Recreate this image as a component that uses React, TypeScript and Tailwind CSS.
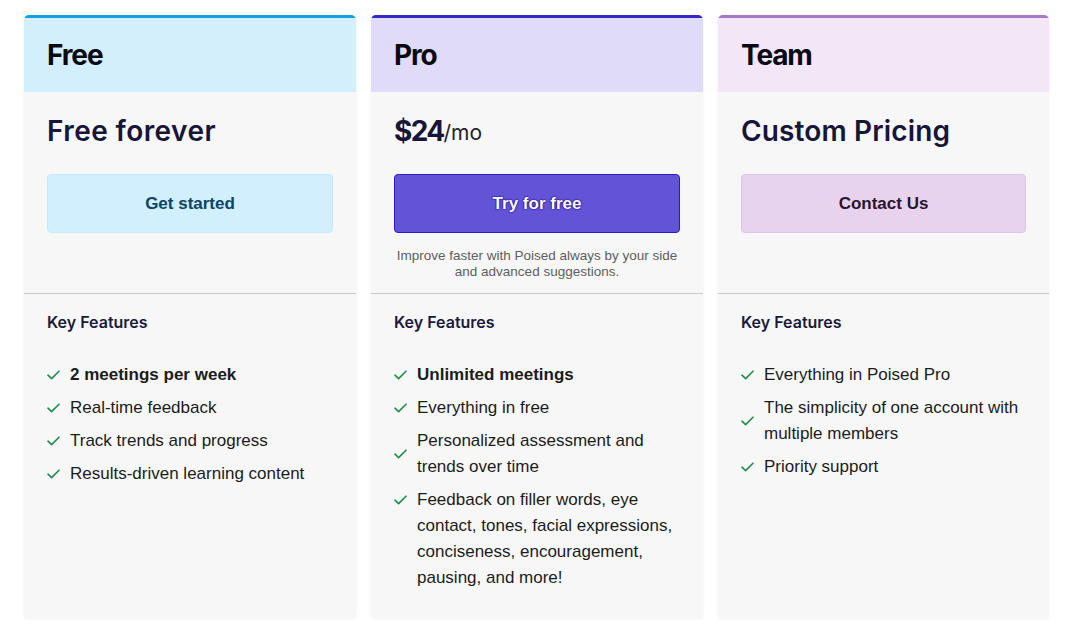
import React from "react";

type Feature = { text: string; bold?: boolean; top?: boolean };

const sans = '"Liberation Sans", Arial, sans-serif';
const head = 'Inter, "Noto Sans", sans-serif';

function Check() {
  return (
    <svg width="13" height="10" viewBox="0 0 13 10" fill="none" className="shrink-0">
      <path d="M1 5.2 L4.6 8.6 L12 1.2" stroke="#1f8a4c" strokeWidth="1.6" strokeLinecap="round" strokeLinejoin="round" />
    </svg>
  );
}

function FeatureList({ items }: { items: Feature[] }) {
  return (
    <ul className="flex flex-col gap-[7px]">
      {items.map((f) => (
        <li key={f.text} className={`flex gap-[10px] ${f.top ? "items-start" : "items-center"}`}>
          <span className={f.top ? "pt-[8px]" : ""}>
            <Check />
          </span>
          <span
            className={`text-[17px] leading-[26px] text-[#1c1c1c] ${f.bold ? "font-bold" : ""}`}
            style={{ fontFamily: sans }}
          >
            {f.text}
          </span>
        </li>
      ))}
    </ul>
  );
}

function KeyFeatures({ items }: { items: Feature[] }) {
  return (
    <div className="border-t border-[#c9c9c9] px-[23px] pt-[18px]">
      <div className="text-[16px] font-semibold leading-[20px] text-[#1b1a3c]" style={{ fontFamily: head }}>
        Key Features
      </div>
      <div className="mt-[30px]">
        <FeatureList items={items} />
      </div>
    </div>
  );
}

function Header({ title, border, bg }: { title: string; border: string; bg: string }) {
  return (
    <div className={`flex h-[77px] items-center border-t-[3px] px-[23px] ${border} ${bg}`}>
      <h2 className="text-[28px] font-bold tracking-[-0.04em] text-[#0a0a14]" style={{ fontFamily: head }}>
        {title}
      </h2>
    </div>
  );
}

const card =
  "flex h-[603px] flex-col overflow-hidden rounded-t-[5px] rounded-b-[4px] bg-[#f7f7f7] shadow-[0_1px_3px_rgba(0,0,0,0.06)]";

export default function App() {
  return (
    <div className="min-h-[638px] w-[1070px] bg-white">
      <div className="flex gap-[15px] pl-[24px] pt-[15px]">
        {/* Free */}
        <div className={`${card} w-[332px]`}>
          <Header title="Free" border="border-[#16a2e2]" bg="bg-[#d3effc]" />
          <div className="flex h-[201px] flex-col px-[23px] pt-[19px]">
            <div className="h-[40px] text-[28px] font-semibold leading-[40px] tracking-[0.015em] text-[#17153a]" style={{ fontFamily: head }}>
              Free forever
            </div>
            <button
              className="mt-[23px] h-[59px] w-full rounded-[4px] border border-[#c8e9f8] bg-[#d1effc] text-[17px] font-bold text-[#0b4565]"
              style={{ fontFamily: sans }}
            >
              Get started
            </button>
          </div>
          <KeyFeatures
            items={[
              { text: "2 meetings per week", bold: true },
              { text: "Real-time feedback" },
              { text: "Track trends and progress" },
              { text: "Results-driven learning content" },
            ]}
          />
        </div>

        {/* Pro */}
        <div className={`${card} w-[332px]`}>
          <Header title="Pro" border="border-[#3527c4]" bg="bg-[#e0dcf8]" />
          <div className="flex h-[201px] flex-col px-[23px] pt-[19px]">
            <div className="flex h-[40px] items-center text-[#17153a]" style={{ fontFamily: head }}>
              <span className="text-[28px] font-bold leading-[40px] tracking-[-0.06em]">$24</span>
              <span className="pt-[3px] text-[21px] font-normal leading-[40px] text-[#222]">/mo</span>
            </div>
            <button
              className="mt-[23px] h-[59px] w-full rounded-[4px] border border-[#2a1cc0] bg-[#6353d6] text-[17px] font-bold text-white [text-shadow:0_0_2px_#1a0c80,0_0_1px_#1a0c80,0_0_1px_#1a0c80]"
              style={{ fontFamily: sans }}
            >
              Try for free
            </button>
            <p className="mt-[15px] text-center text-[13.5px] leading-[16px] text-[#5e5e5e]" style={{ fontFamily: sans }}>
              Improve faster with Poised always by your side
              <br />
              and advanced suggestions.
            </p>
          </div>
          <KeyFeatures
            items={[
              { text: "Unlimited meetings", bold: true },
              { text: "Everything in free" },
              { text: "Personalized assessment and trends over time" },
              {
                text: "Feedback on filler words, eye contact, tones, facial expressions, conciseness, encouragement, pausing, and more!",
                top: true,
              },
            ]}
          />
        </div>

        {/* Team */}
        <div className={`${card} w-[331px]`}>
          <Header title="Team" border="border-[#a579c6]" bg="bg-[#f3e6f7]" />
          <div className="flex h-[201px] flex-col px-[23px] pt-[19px]">
            <div className="h-[40px] text-[28px] font-semibold leading-[40px] tracking-[0.005em] text-[#17153a]" style={{ fontFamily: head }}>
              Custom Pricing
            </div>
            <button
              className="mt-[23px] h-[59px] w-full rounded-[4px] border border-[#dcc4e8] bg-[#e8d3ef] text-[17px] font-bold text-[#2a1530]"
              style={{ fontFamily: sans }}
            >
              Contact Us
            </button>
          </div>
          <KeyFeatures
            items={[
              { text: "Everything in Poised Pro" },
              { text: "The simplicity of one account with multiple members" },
              { text: "Priority support" },
            ]}
          />
        </div>
      </div>
    </div>
  );
}
